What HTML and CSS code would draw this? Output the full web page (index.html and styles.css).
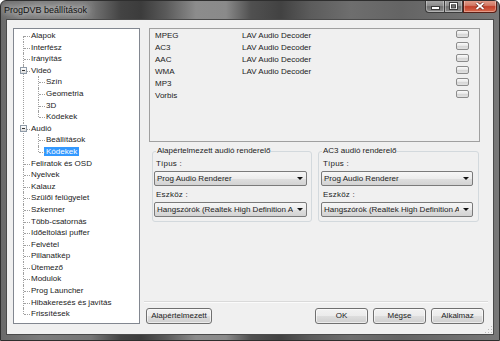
FILE: index.html
```html
<!DOCTYPE html>
<html lang="hu">
<head>
<meta charset="utf-8">
<title>ProgDVB beállítások</title>
<link rel="stylesheet" href="styles.css">
</head>
<body>
<div class="window">
  <div class="titlebar">
    <span class="title">ProgDVB beállítások</span>
    <div class="caps">
      <span class="cap min"><svg width="9" height="4" viewBox="0 0 9 4"><rect x="0.5" y="0.5" width="8" height="3" fill="#fff" stroke="#3a3a3a"/></svg></span>
      <span class="cap max"><svg width="9" height="8" viewBox="0 0 9 8"><rect x="0.5" y="0.5" width="8" height="7" fill="none" stroke="#3a3a3a"/><rect x="1.5" y="1.5" width="6" height="5" fill="none" stroke="#fff"/><rect x="2.5" y="3" width="4" height="3" fill="none" stroke="#3a3a3a" stroke-width="0.8"/></svg></span>
      <span class="cap close"><svg width="10" height="8" viewBox="0 0 10 8"><path d="M1.5 1 L8.5 7 M8.5 1 L1.5 7" stroke="#6a2418" stroke-width="3.2"/><path d="M1.5 1 L8.5 7 M8.5 1 L1.5 7" stroke="#fff" stroke-width="1.7"/></svg></span>
    </div>
  </div>
  <div class="client">
    <ul class="tree">
      <li class="root-first">Alapok</li>
      <li>Interfész</li>
      <li>Irányítás</li>
      <li><span class="exp"></span>Videó
        <ul>
          <li>Szín</li>
          <li>Geometria</li>
          <li>3D</li>
          <li>Kódekek</li>
        </ul>
      </li>
      <li><span class="exp"></span>Audió
        <ul>
          <li>Beállítások</li>
          <li><span class="sel">Kódekek</span></li>
        </ul>
      </li>
      <li>Feliratok és OSD</li>
      <li>Nyelvek</li>
      <li>Kalauz</li>
      <li>Szülői felügyelet</li>
      <li>Szkenner</li>
      <li>Több-csatornás</li>
      <li>Időeltolási puffer</li>
      <li>Felvétel</li>
      <li>Pillanatkép</li>
      <li>Ütemező</li>
      <li>Modulok</li>
      <li>Prog Launcher</li>
      <li>Hibakeresés és javítás</li>
      <li>Frissítések</li>
    </ul>
    <div class="pane">
      <div class="list">
        <div class="row"><span class="name">MPEG</span><span class="desc">LAV Audio Decoder</span><span class="mini"></span></div>
        <div class="row"><span class="name">AC3</span><span class="desc">LAV Audio Decoder</span><span class="mini"></span></div>
        <div class="row"><span class="name">AAC</span><span class="desc">LAV Audio Decoder</span><span class="mini"></span></div>
        <div class="row"><span class="name">WMA</span><span class="desc">LAV Audio Decoder</span><span class="mini"></span></div>
        <div class="row"><span class="name">MP3</span><span class="desc"></span><span class="mini"></span></div>
        <div class="row"><span class="name">Vorbis</span><span class="desc"></span><span class="mini"></span></div>
      </div>
      <div class="groups">
        <div class="group g-left">
          <span class="gtitle">Alapértelmezett audió renderelő</span>
          <div class="flabel">Típus :</div>
          <div class="combo"><span class="ctext">Prog Audio Renderer</span><span class="arrow"></span></div>
          <div class="flabel">Eszköz :</div>
          <div class="combo"><span class="ctext">Hangszórók (Realtek High Definition Audio)</span><span class="arrow"></span></div>
        </div>
        <div class="group g-right">
          <span class="gtitle">AC3 audió renderelő</span>
          <div class="flabel">Típus :</div>
          <div class="combo"><span class="ctext">Prog Audio Renderer</span><span class="arrow"></span></div>
          <div class="flabel">Eszköz :</div>
          <div class="combo"><span class="ctext">Hangszórók (Realtek High Definition Audio)</span><span class="arrow"></span></div>
        </div>
      </div>
      <div class="spacer"></div>
      <div class="sep"></div>
      <div class="buttons">
        <button class="btn wide">Alapértelmezett</button>
        <span class="fill"></span>
        <button class="btn">OK</button>
        <button class="btn">Mégse</button>
        <button class="btn">Alkalmaz</button>
      </div>
    </div>
    <span class="grip"></span>
  </div>
</div>
</body>
</html>
```

FILE: styles.css
```css
html, body {
  margin: 0;
  padding: 0;
  background: #ffffff;
}
body {
  width: 500px;
  height: 341px;
  overflow: hidden;
  font-family: "Liberation Sans", Arial, sans-serif;
  font-size: 8px;
  color: #222;
}
.window {
  width: 500px;
  height: 341px;
  box-sizing: border-box;
  display: flex;
  flex-direction: column;
  border: 1px solid #2e2e2e;
  border-radius: 6px 6px 0 0;
  background:
    linear-gradient(to right,
      #6a6a6a 0px, #7c7c7c 40px, #767676 90px, #434343 120px, #3c3c3c 140px,
      #5a5a5a 165px, #8c8c8c 195px, #8a8a8a 225px, #505050 250px, #424242 280px,
      #5c5c5c 310px, #6e6e6e 350px, #646464 400px, #6c6c6c 440px, #787878 500px);
  overflow: hidden;
}
.titlebar {
  height: 19px;
  flex: none;
  display: flex;
  align-items: flex-start;
  padding-left: 3px;
}
.title {
  font-family: "Liberation Sans", Arial, sans-serif;
  font-size: 9px;
  line-height: 19px;
  color: #111;
  text-shadow: 0 0 6px rgba(255,255,255,0.9), 0 0 10px rgba(255,255,255,0.7), 0 0 14px rgba(255,255,255,0.5);
}
.caps {
  margin-left: auto;
  margin-right: 2px;
  display: flex;
  margin-top: -1px;
}
.cap {
  height: 13px;
  box-sizing: border-box;
  display: flex;
  align-items: center;
  justify-content: center;
  border: 1px solid #3b3b3b;
  border-top: none;
  box-shadow: inset 0 0 0 1px rgba(255,255,255,0.35);
}
.min {
  width: 19px;
  border-radius: 0 0 0 4px;
  border-right: none;
  background: linear-gradient(#a9a9a9, #8a8a8a 50%, #6e6e6e 55%, #8e8e8e);
}
.min svg { margin-top: 4px; }
.max {
  width: 19px;
  background: linear-gradient(#a9a9a9, #8a8a8a 50%, #6e6e6e 55%, #8e8e8e);
}
.close {
  width: 34px;
  border-radius: 0 0 4px 0;
  border-color: #5a1f16;
  background: linear-gradient(#e6a290, #d27a66 45%, #c2412c 55%, #d8694c);
}
.client {
  flex: 1;
  margin: 0 6px 6px 6px;
  background: #f0f0f0;
  box-shadow: 0 0 0 1px #4a4a4a;
  display: flex;
  padding: 8px 5px 10px 6px;
  position: relative;
}
/* tree */
.tree, .tree ul {
  list-style: none;
  margin: 0;
  padding: 0;
}
.tree {
  flex: none;
  width: 127px;
  height: 296px;
  box-sizing: border-box;
  border: 1px solid #828790;
  background: #fff;
  padding-top: 1px;
}
.tree li {
  position: relative;
  padding-left: 17px;
  line-height: 11.6px;
  white-space: nowrap;
}
.tree ul {
  margin-left: -2px;
}
.tree li::before {
  content: "";
  position: absolute;
  left: 9px;
  top: 0;
  bottom: 0;
  border-left: 1px dotted #a0a0a0;
}
.tree li.root-first::before {
  top: 6px;
}
.tree li:last-child::before {
  bottom: auto;
  height: 6px;
}
.tree li::after {
  content: "";
  position: absolute;
  left: 10px;
  top: 6px;
  width: 6px;
  border-top: 1px dotted #a0a0a0;
}
.exp {
  position: absolute;
  left: 6px;
  top: 2px;
  width: 7px;
  height: 7px;
  box-sizing: border-box;
  border: 1px solid #8f9ba8;
  background: linear-gradient(#ffffff, #dcdcdc);
  z-index: 1;
}
.exp::before {
  content: "";
  position: absolute;
  left: 1px;
  top: 2px;
  width: 3px;
  height: 1px;
  background: #333;
}
.sel {
  background: #3399ff;
  color: #fff;
  padding: 0 2px;
  margin-left: -2px;
}
/* right pane */
.pane {
  flex: 1;
  margin-left: 4px;
  display: flex;
  flex-direction: column;
}
.list {
  margin-left: 5px;
  width: 331px;
  height: 114px;
  box-sizing: border-box;
  border: 1px solid #a0a0a0;
  background: #f0f0f0;
  padding: 1px 10px 0 5px;
}
.row {
  height: 12px;
  display: flex;
  align-items: center;
  line-height: 12px;
}
.name {
  width: 87px;
  flex: none;
}
.desc {
  flex: 1;
}
.mini {
  align-self: flex-start;
  width: 13px;
  height: 8px;
  box-sizing: border-box;
  border: 1px solid #8c8c8c;
  border-radius: 2px;
  background: linear-gradient(#fbfbfb, #e6e6e6 50%, #d6d6d6 55%, #e2e2e2);
}
.groups {
  display: flex;
  gap: 6px;
  margin-top: 9px;
  margin-left: 8px;
}
.group {
  position: relative;
  box-sizing: border-box;
  border: 1px solid #d3d9dd;
  border-radius: 3px;
  padding: 7px 4px 4px 1px;
  display: flex;
  flex-direction: column;
}
.g-left { width: 160px; }
.g-right { width: 161px; padding-left: 2px; padding-right: 5px; }
.gtitle {
  position: absolute;
  top: -6px;
  left: 3px;
  padding: 0 1px;
  background: #f0f0f0;
  line-height: 10px;
  white-space: nowrap;
}
.flabel {
  line-height: 10px;
  height: 10px;
  padding-left: 2px;
  letter-spacing: 0.2px;
}
.combo {
  margin-top: 2px;
  height: 15px;
  box-sizing: border-box;
  border: 1px solid #7a7a7a;
  border-radius: 2px;
  background: linear-gradient(#f6f6f6, #ececec 50%, #dedede 55%, #d3d3d3);
  display: flex;
  align-items: center;
  overflow: hidden;
}
.combo + .flabel {
  margin-top: 4px;
}
.ctext {
  flex: 1;
  overflow: hidden;
  white-space: nowrap;
  padding-left: 2px;
  line-height: 13px;
}
.arrow {
  flex: none;
  width: 13px;
  height: 13px;
  position: relative;
}
.arrow::before {
  content: "";
  position: absolute;
  left: 4px;
  top: 5px;
  border-left: 3px solid transparent;
  border-right: 3px solid transparent;
  border-top: 3px solid #111;
}
.spacer {
  flex: 1;
}
.sep {
  height: 0;
  border-top: 1px solid #dadada;
  border-bottom: 1px solid #fbfbfb;
  margin-bottom: 5px;
}
.buttons {
  display: flex;
  gap: 5px;
  padding-left: 2px;
  padding-right: 4px;
}
.fill {
  flex: 1;
}
.btn {
  width: 53px;
  height: 16px;
  box-sizing: border-box;
  padding: 0;
  margin: 0;
  border: 1px solid #707070;
  border-radius: 3px;
  background: linear-gradient(#f2f2f2, #ebebeb 50%, #dddddd 52%, #cfcfcf);
  box-shadow: inset 0 0 0 1px rgba(255,255,255,0.6);
  font-family: "Liberation Sans", Arial, sans-serif;
  font-size: 8px;
  color: #222;
  line-height: 14px;
  text-align: center;
}
.btn.wide {
  width: 66px;
}
.grip {
  position: absolute;
  right: 1px;
  bottom: 1px;
  width: 8px;
  height: 8px;
  background:
    radial-gradient(circle, #b9b9b9 0.8px, transparent 1px) 0 0 / 3px 3px;
  clip-path: polygon(100% 0, 100% 100%, 0 100%);
}
```
